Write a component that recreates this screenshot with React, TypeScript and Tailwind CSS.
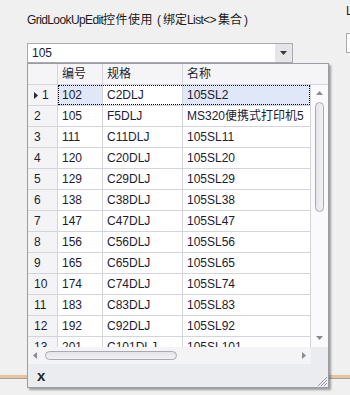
import React from "react";

const rows: [string, string, string, string][] = [
  ["1", "102", "C2DLJ", "105SL2"],
  ["2", "105", "F5DLJ", "MS320便携式打印机5"],
  ["3", "111", "C11DLJ", "105SL11"],
  ["4", "120", "C20DLJ", "105SL20"],
  ["5", "129", "C29DLJ", "105SL29"],
  ["6", "138", "C38DLJ", "105SL38"],
  ["7", "147", "C47DLJ", "105SL47"],
  ["8", "156", "C56DLJ", "105SL56"],
  ["9", "165", "C65DLJ", "105SL65"],
  ["10", "174", "C74DLJ", "105SL74"],
  ["11", "183", "C83DLJ", "105SL83"],
  ["12", "192", "C92DLJ", "105SL92"],
  ["13", "201", "C101DLJ", "105SL101"],
];

function Tri({ dir, color = "#8a8a92" }: { dir: "up" | "down" | "left" | "right"; color?: string }) {
  const pts =
    dir === "up"
      ? "0,4 7,4 3.5,0"
      : dir === "down"
      ? "0,0 7,0 3.5,4"
      : dir === "left"
      ? "4,0 4,7 0,3.5"
      : "0,0 0,7 4,3.5";
  const w = dir === "up" || dir === "down" ? 7 : 4;
  const h = dir === "up" || dir === "down" ? 4 : 7;
  return (
    <svg width={w} height={h} viewBox={`0 0 ${w} ${h}`}>
      <polygon points={pts} fill={color} />
    </svg>
  );
}

export default function App() {
  return (
    <div className="relative w-[350px] h-[395px] overflow-hidden bg-[#f0f0f0] font-['Liberation_Sans','Noto_Sans_CJK_SC',sans-serif] text-[12px] text-[#1c1c30]">
      <div className="flex">
        <div className="w-[319px] shrink-0 pl-[27px] pt-[12px]">
          <div className="flex h-[16px] items-center whitespace-nowrap leading-[16px] text-[#1b1b1b]">
            <span className="inline-block w-[76px] tracking-[-0.6px]">GridLookUpEdit</span>
            <span className="inline-block w-[52px] tracking-[0.5px]">控件使用</span>
            <span className="inline-block w-[8px] pl-[2px]">(</span>
            <span className="inline-block w-[24px]">绑定</span>
            <span className="inline-block w-[16px] tracking-[-0.6px]">List</span>
            <span className="inline-block w-[15px] tracking-[-0.5px]">&lt;&gt;</span>
            <span className="inline-block w-[26px]">集合</span>
            <span className="inline-block">)</span>
          </div>
          <div className="mt-[15px] flex h-[20px] w-[266px] border border-[#a9a9b0] bg-white">
            <div className="flex-1 pl-[4px] leading-[18px] text-[#1c1c30]">105</div>
            <div className="flex w-[17px] items-center justify-center bg-[#e6e6e8]">
              <Tri dir="down" color="#3a3a40" />
            </div>
          </div>
        </div>
        <div className="ml-[27px] w-[4px] shrink-0 overflow-visible pt-[5px]">
          <div className="h-[12px] leading-[12px] text-[12px] text-[#1b1b1b]">L</div>
          <div className="mt-[16px] h-[20px] w-[20px] border border-[#a9a9a9] bg-white" />
        </div>
      </div>

      <div className="mt-[311px] h-[5px] border-t border-[#f6eadc] bg-[#e4c4a2] border-b border-b-[#a8a29c]" />

      {/* Popup */}
      <div className="absolute left-[27px] top-[63px] flex h-[325px] w-[302px] flex-col border border-[#9c9ca4] bg-[#ebecf0] shadow-[2px_2px_2px_rgba(0,0,0,0.35)]">
        {/* header */}
        <div className="flex h-[21px] shrink-0 border-b border-[#d4d4dc] bg-[#f5f5f7] leading-[20px]">
          <div className="w-[30px] border-r border-[#d4d4dc]" />
          <div className="w-[45px] border-r border-[#d4d4dc] pl-[4px]">编号</div>
          <div className="w-[80px] border-r border-[#d4d4dc] pl-[4px]">规格</div>
          <div className="flex-1 pl-[4px]">名称</div>
        </div>
        {/* body */}
        <div className="flex h-[262px] shrink-0 overflow-hidden">
          <div className="w-[283px] overflow-hidden bg-white">
            {rows.map((r, i) => {
              const sel = i === 0;
              return (
                <div key={i} className="relative flex h-[21px] border-b border-[#d4d4dc] leading-[20px]">
                  <div className="flex w-[30px] items-center border-r border-[#d4d4dc] bg-[#f4f4f7] pl-[6px]">
                    {sel ? (
                      <>
                        <span className="mr-[4px] mt-[1px]">
                          <Tri dir="right" color="#2a2a3a" />
                        </span>
                        <span>{r[0]}</span>
                      </>
                    ) : (
                      <span>{r[0]}</span>
                    )}
                  </div>
                  <div className={`w-[45px] border-r border-[#d4d4dc] pl-[4px] ${sel ? "bg-[#dfe7f8]" : ""}`}>{r[1]}</div>
                  <div className="w-[80px] border-r border-[#d4d4dc] pl-[4px] whitespace-nowrap">{r[2]}</div>
                  <div className={`flex-1 whitespace-nowrap border-r border-[#d4d4dc] pl-[4px] ${sel ? "bg-[#dfe7f8]" : ""}`}>{r[3]}</div>
                  {sel && (
                    <div className="pointer-events-none absolute left-[30px] top-0 h-[20px] w-[252px] border border-dotted border-black" />
                  )}
                </div>
              );
            })}
          </div>
          {/* v scrollbar */}
          <div className="flex w-[17px] flex-col items-center bg-[#fafafb]">
            <div className="mt-[6px] h-[4px]">
              <Tri dir="up" />
            </div>
            <div className="mt-[7px] h-[110px] w-[9px] rounded-full border border-[#a9a9b2] bg-gradient-to-r from-[#e4e4ea] to-[#f2f2f6]" />
            <div className="flex-1" />
            <div className="mb-[7px] h-[4px]">
              <Tri dir="down" />
            </div>
          </div>
        </div>
        {/* h scrollbar */}
        <div className="flex h-[17px] shrink-0">
          <div className="flex w-[283px] items-center bg-[#f4f4f6]">
            <div className="ml-[5px]">
              <Tri dir="left" />
            </div>
            <div className="ml-[8px] h-[9px] w-[132px] rounded-full border border-[#a9a9b2] bg-gradient-to-b from-[#e4e4ea] to-[#f2f2f6]" />
            <div className="flex-1" />
            <div className="mr-[5px]">
              <Tri dir="right" />
            </div>
          </div>
          <div className="flex-1 bg-[#ebecf0]" />
        </div>
        {/* footer */}
        <div className="relative flex-1 bg-[#ebecf0] pl-[9px]">
          <div className="mt-[3px] text-[15px] font-bold leading-[18px] text-[#25252e]">x</div>
          <svg className="absolute bottom-0 right-0" width="12" height="12" viewBox="0 0 12 12">
            <line x1="11" y1="2" x2="2" y2="11" stroke="#9a9aa2" strokeWidth="1" />
            <line x1="11" y1="5" x2="5" y2="11" stroke="#9a9aa2" strokeWidth="1" />
            <line x1="11" y1="8" x2="8" y2="11" stroke="#9a9aa2" strokeWidth="1" />
          </svg>
        </div>
      </div>
    </div>
  );
}
